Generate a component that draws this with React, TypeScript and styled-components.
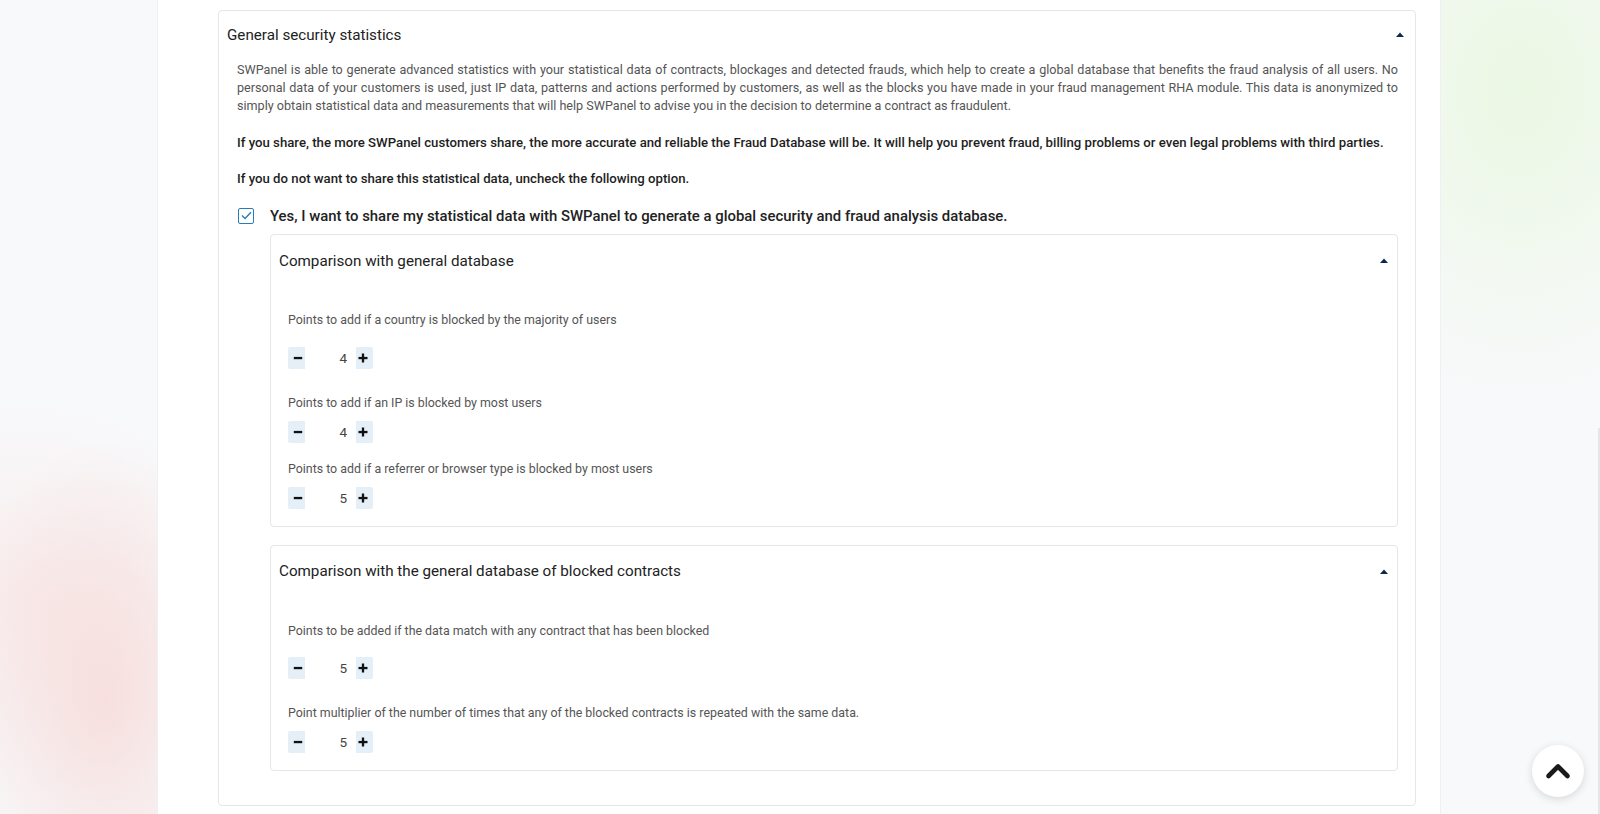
import React from 'react'
import styled, { createGlobalStyle } from 'styled-components'

const GlobalStyle = createGlobalStyle`
	html, body {
		margin: 0;
		padding: 0;
		height: 814px;
		overflow: hidden;
	}

	body {
		font-family: Roboto, 'Liberation Sans', Arial, sans-serif;
		color: #333;
	}
`

const Page = styled.div`
	display: grid;
	grid-template-columns: 158px 1282px 1fr;
	height: 814px;
	background: #f8f9fb;
`

const LeftAside = styled.div`
	background:
		radial-gradient(ellipse 150px 260px at 105px 700px, rgba(246, 214, 212, 0.7), rgba(246, 214, 212, 0) 100%),
		radial-gradient(ellipse 220px 200px at 30px 600px, rgba(248, 226, 224, 0.55), rgba(248, 226, 224, 0) 100%),
		#f8f9fb;
	border-right: 1px solid #eef0f3;
`

const RightAside = styled.div`
	background:
		radial-gradient(ellipse 240px 320px at 80px 90px, rgba(234, 248, 226, 0.95), rgba(234, 248, 226, 0) 100%),
		#f8f9fb;
	border-left: 1px solid #eef0f3;
`

const Main = styled.main`
	background: #fff;
	padding: 10px 24px 0 60px;
`

const Card = styled.section<{ $nested?: boolean }>`
	border: 1px solid #e4e7eb;
	border-radius: 4px;
	background: #fff;
	margin-bottom: ${p => (p.$nested ? '18px' : '0')};
`

const CardHeader = styled.header<{ $nested?: boolean }>`
	display: flex;
	align-items: center;
	justify-content: space-between;
	height: ${p => (p.$nested ? '51px' : '47px')};
	padding: ${p => (p.$nested ? '0 9px 0 8px' : '0 11px 0 8px')};
`

const CardTitle = styled.h2`
	margin: 0;
	font-size: 15.2px;
	font-weight: 400;
	color: #222;
`

const CardBody = styled.div`
	padding: 3px 17px 16px 18px;
`

const NestedBody = styled.div`
	padding: 25px 18px 0 17px;
`

const Paragraph = styled.p<{ $strong?: boolean }>`
	margin: 0 0 18.6px;
	font-size: ${p => (p.$strong ? '13.2px' : '12.6px')};
	line-height: 18px;
	font-weight: ${p => (p.$strong ? 500 : 400)};
	color: ${p => (p.$strong ? '#1e1e1e' : '#555')};
	text-align: justify;
`

const CheckRow = styled.label`
	display: flex;
	align-items: center;
	gap: 16px;
	height: 18px;
	margin: 0 0 9.5px 1px;
	font-size: 14.9px;
	font-weight: 500;
	color: #222;
`

const CheckBox = styled.span`
	display: flex;
	align-items: center;
	justify-content: center;
	flex: none;
	width: 16px;
	height: 16px;
	box-sizing: border-box;
	border: 1.5px solid #2b7cb3;
	border-radius: 2px;
	color: #2b7cb3;
`

const Nested = styled.div`
	margin-left: 33px;
`

const Field = styled.div<{ $first?: boolean }>`
	margin-bottom: ${p => (p.$first ? '25px' : '17.5px')};

	&:last-child {
		margin-bottom: 16.5px;
	}
`

const FieldLabel = styled.div<{ $first?: boolean }>`
	font-size: 12.4px;
	line-height: 18px;
	color: #555;
	margin-bottom: ${p => (p.$first ? '17.5px' : '9px')};
`

const Spinner = styled.div`
	display: inline-flex;
	align-items: stretch;
	height: 22px;
	background: #e4eff8;
	border-radius: 2px;
`

const SpinButton = styled.button<{ $side: 'left' | 'right' }>`
	display: flex;
	align-items: center;
	justify-content: ${p => (p.$side === 'left' ? 'flex-end' : 'flex-start')};
	width: 17px;
	padding: ${p => (p.$side === 'left' ? '0 2px 0 0' : '0 0 0 2px')};
	border: 0;
	background: transparent;
	color: #111;
	cursor: pointer;
`

const SpinValue = styled.span`
	display: flex;
	align-items: center;
	justify-content: flex-end;
	width: 42px;
	padding-right: 9px;
	background: #fff;
	font-size: 13.5px;
	color: #444;
`

const ScrollTop = styled.button`
	position: fixed;
	left: 1532px;
	top: 745px;
	width: 52px;
	height: 52px;
	border: 0;
	border-radius: 50%;
	background: #fff;
	box-shadow: 0 2px 8px rgba(0, 0, 0, 0.14);
	display: flex;
	align-items: center;
	justify-content: center;
	cursor: pointer;
`

const ScrollEdge = styled.div`
	position: fixed;
	right: 0;
	top: 428px;
	width: 2px;
	height: 386px;
	background: #e6e6e6;
`

function Caret() {
	return (
		<svg width="8" height="5" viewBox="0 0 8 5">
			<path d="M0 5 L4 0.5 L8 5 Z" fill="#0c2a4d" />
		</svg>
	)
}

function Minus() {
	return (
		<svg width="10" height="10" viewBox="0 0 10 10">
			<rect x="0.8" y="3.9" width="8.4" height="2.3" fill="currentColor" />
		</svg>
	)
}

function Plus() {
	return (
		<svg width="10" height="10" viewBox="0 0 10 10">
			<rect x="0.5" y="3.9" width="9" height="2.3" fill="currentColor" />
			<rect x="3.85" y="0.5" width="2.3" height="9" fill="currentColor" />
		</svg>
	)
}

function NumberSpinner({ value }: { value: number }) {
	return (
		<Spinner>
			<SpinButton $side="left" aria-label="decrease"><Minus /></SpinButton>
			<SpinValue>{value}</SpinValue>
			<SpinButton $side="right" aria-label="increase"><Plus /></SpinButton>
		</Spinner>
	)
}

type FieldData = { label: string; value: number }

const generalFields: FieldData[] = [
	{ label: 'Points to add if a country is blocked by the majority of users', value: 4 },
	{ label: 'Points to add if an IP is blocked by most users', value: 4 },
	{ label: 'Points to add if a referrer or browser type is blocked by most users', value: 5 },
]

const contractFields: FieldData[] = [
	{ label: 'Points to be added if the data match with any contract that has been blocked', value: 5 },
	{ label: 'Point multiplier of the number of times that any of the blocked contracts is repeated with the same data.', value: 5 },
]

function Section({ title, fields }: { title: string; fields: FieldData[] }) {
	return (
		<Card $nested>
			<CardHeader $nested>
				<CardTitle>{title}</CardTitle>
				<Caret />
			</CardHeader>
			<NestedBody>
				{fields.map((f, i) => (
					<Field key={f.label} $first={i === 0}>
						<FieldLabel $first={i === 0}>{f.label}</FieldLabel>
						<NumberSpinner value={f.value} />
					</Field>
				))}
			</NestedBody>
		</Card>
	)
}

export default function App() {
	return (
		<>
			<GlobalStyle />
			<Page>
				<LeftAside />
				<Main>
					<Card>
						<CardHeader>
							<CardTitle>General security statistics</CardTitle>
							<Caret />
						</CardHeader>
						<CardBody>
							<Paragraph>
								SWPanel is able to generate advanced statistics with your statistical data of contracts, blockages and detected frauds, which help to create a global database that benefits the fraud analysis of all users. No personal data of your customers is used, just IP data, patterns and actions performed by customers, as well as the blocks you have made in your fraud management RHA module. This data is anonymized to simply obtain statistical data and measurements that will help SWPanel to advise you in the decision to determine a contract as fraudulent.
							</Paragraph>
							<Paragraph $strong>
								If you share, the more SWPanel customers share, the more accurate and reliable the Fraud Database will be. It will help you prevent fraud, billing problems or even legal problems with third parties.
							</Paragraph>
							<Paragraph $strong>
								If you do not want to share this statistical data, uncheck the following option.
							</Paragraph>
							<CheckRow>
								<CheckBox>
									<svg width="11" height="9" viewBox="0 0 11 9">
										<path d="M1 4.6 L4 7.6 L10 1.2" fill="none" stroke="currentColor" strokeWidth="1.4" />
									</svg>
								</CheckBox>
								Yes, I want to share my statistical data with SWPanel to generate a global security and fraud analysis database.
							</CheckRow>
							<Nested>
								<Section title="Comparison with general database" fields={generalFields} />
								<Section title="Comparison with the general database of blocked contracts" fields={contractFields} />
							</Nested>
						</CardBody>
					</Card>
				</Main>
				<RightAside />
			</Page>
			<ScrollTop aria-label="Back to top">
				<svg width="26" height="18" viewBox="0 0 26 18">
					<path d="M3.5 14 L13 4.5 L22.5 14" fill="none" stroke="#1a1a1a" strokeWidth="4.6" strokeLinecap="round" strokeLinejoin="round" />
				</svg>
			</ScrollTop>
			<ScrollEdge />
		</>
	)
}
